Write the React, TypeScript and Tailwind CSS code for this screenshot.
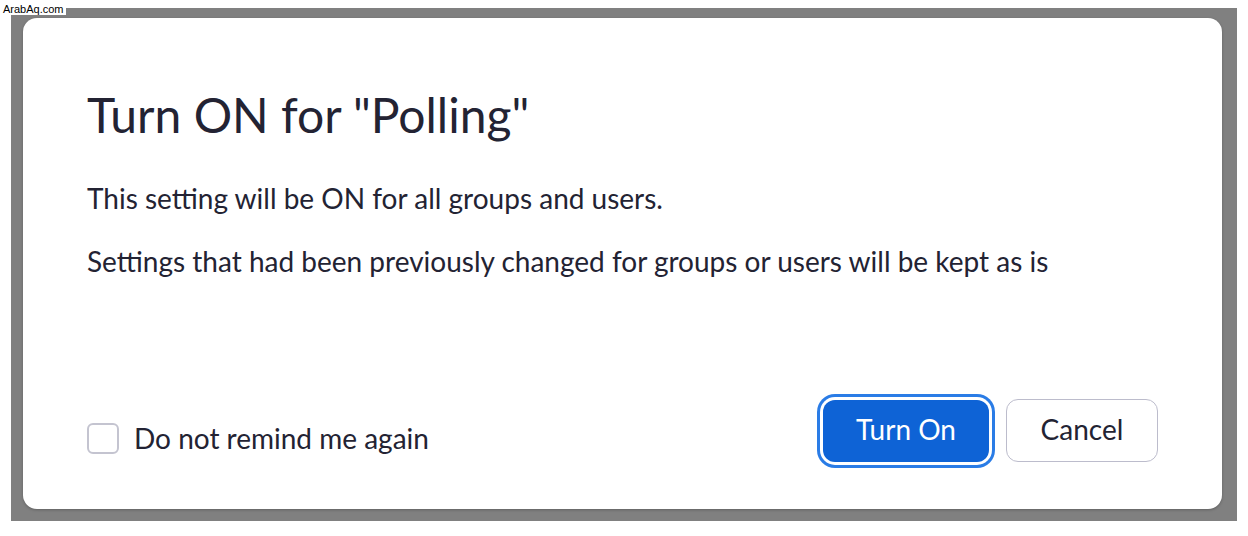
import React from "react";

const FONT = { fontFamily: "Lato, 'Noto Sans', sans-serif" };

export default function App() {
  return (
    <div className="relative w-[1248px] h-[536px] bg-white overflow-hidden" style={FONT}>
      {/* watermark */}
      <div
        className="absolute left-0 top-0 bg-white pl-[3px] pr-[2px] pt-[3px] text-[11px] leading-[12px] text-black"
        style={{ fontFamily: "'Liberation Sans', Arial, sans-serif" }}
      >
        ArabAq.com
      </div>

      <div className="ml-[11px] mt-[8px] w-[1226px] h-[513px] bg-[#808080] pt-[10px] pl-[12px]">
        <div className="w-[1199px] h-[491px] bg-white rounded-[14px] shadow-[0_1px_3px_rgba(0,0,0,0.25)] flex flex-col px-[64px]">
          <h1 className="mt-[67px] text-[48px] leading-[60px] text-[#232333] font-normal">
            Turn ON for "Polling"
          </h1>

          <p className="mt-[36px] text-[28px] leading-[34px] text-[#232333]">
            This setting will be ON for all groups and users.
          </p>
          <p className="mt-[29px] text-[28px] leading-[34px] text-[#232333]">
            Settings that had been previously changed for groups or users will be kept as is
          </p>

          <div className="mt-auto mb-[47px] flex items-center justify-between">
            <label className="flex items-center gap-[15px] mt-[15px]">
              <span className="block w-[32px] h-[31px] rounded-[6px] border-2 border-[#c4c4d0] bg-white" />
              <span className="text-[28px] leading-[32px] text-[#232333]">Do not remind me again</span>
            </label>

            <div className="flex items-center gap-[17px]">
              <button className="w-[166px] h-[62px] pb-[3px] rounded-[12px] bg-[#0e63d6] text-white text-[28px] shadow-[0_0_0_3px_#ffffff,0_0_0_6px_#2a7ce6]">
                Turn On
              </button>
              <button className="w-[152px] h-[63px] pb-[3px] rounded-[12px] border-[1.5px] border-[#bcbccc] bg-white text-[#232333] text-[28px]">
                Cancel
              </button>
            </div>
          </div>
        </div>
      </div>
    </div>
  );
}
